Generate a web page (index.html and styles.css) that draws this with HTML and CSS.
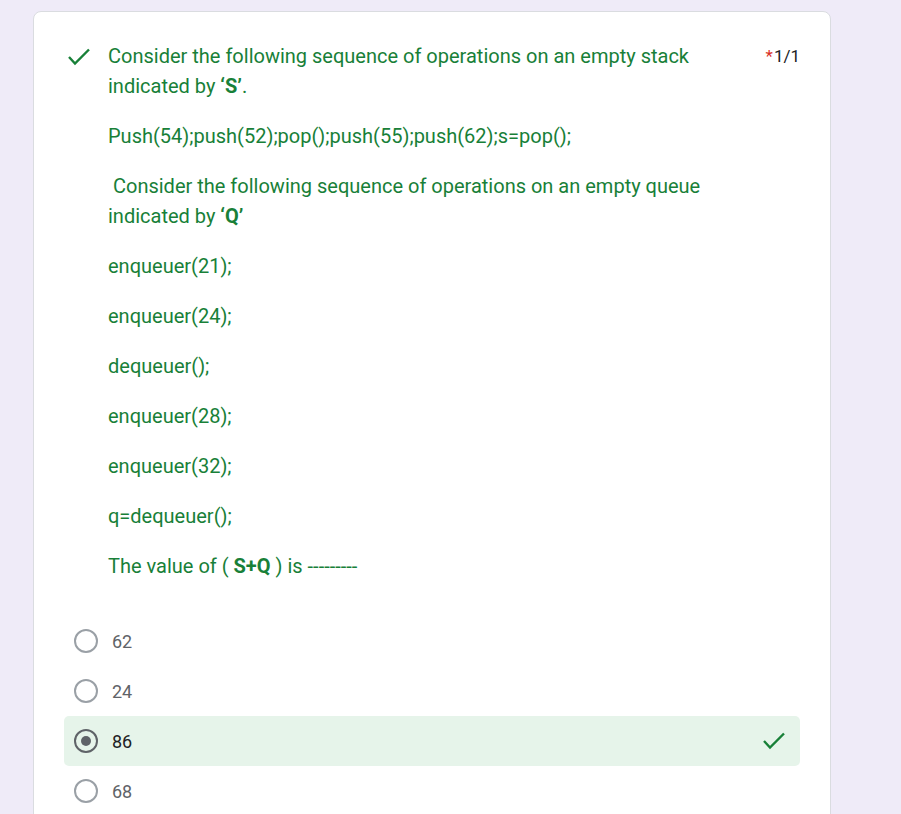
FILE: index.html
```html
<!DOCTYPE html>
<html>
<head>
<meta charset="utf-8">
<link rel="stylesheet" href="styles.css">
</head>
<body>
<div class="card">
  <div class="question">
    <div class="status-icon">
      <svg width="26" height="20" viewBox="0 0 26 20"><polyline points="2,10 8,16.5 22,2.5" fill="none" stroke="#188038" stroke-width="2.4"/></svg>
    </div>
    <div class="title">
      <p>Consider the following sequence of operations on an empty stack indicated by <b>‘S’</b>.</p>
      <p>Push(54);push(52);pop();push(55);push(62);s=pop();</p>
      <p>&nbsp;Consider the following sequence of operations on an empty queue indicated by <b>‘Q’</b></p>
      <p>enqueuer(21);</p>
      <p>enqueuer(24);</p>
      <p>dequeuer();</p>
      <p>enqueuer(28);</p>
      <p>enqueuer(32);</p>
      <p>q=dequeuer();</p>
      <p>The value of ( <b>S+Q</b> ) is ---------</p>
    </div>
    <div class="score"><span class="req">*</span>1/1</div>
  </div>
  <div class="options">
    <div class="option"><span class="radio"></span><span class="label">62</span></div>
    <div class="option"><span class="radio"></span><span class="label">24</span></div>
    <div class="option selected"><span class="radio"></span><span class="label">86</span>
      <svg class="ok" width="26" height="20" viewBox="0 0 26 20"><polyline points="2,10 8,16.5 22,2.5" fill="none" stroke="#188038" stroke-width="2.4"/></svg>
    </div>
    <div class="option"><span class="radio"></span><span class="label">68</span></div>
  </div>
</div>
</body>
</html>
```
FILE: styles.css
```css
html, body {
  margin: 0;
  padding: 0;
  background: #efebf8;
  font-family: Roboto, "Noto Sans", sans-serif;
}
body {
  padding: 11px 0 0 33px;
}
.card {
  background: #fff;
  border: 1px solid #dadce0;
  border-radius: 8px;
  padding: 29px 30px 24px 30px;
  box-sizing: border-box;
  width: 798px;
}
.question {
  display: flex;
  align-items: flex-start;
}
.status-icon {
  width: 41px;
  padding-left: 3px;
  padding-top: 6px;
  flex: none;
}
.status-icon svg { display: block; }
.title {
  width: 625px;
  flex: none;
  color: #188038;
  font-size: 20px;
  line-height: 30px;
}
.title p {
  margin: 0 0 20px 0;
}
.title p:last-child { margin-bottom: 0; }
.title b { font-weight: 700; }
.score {
  margin-left: auto;
  flex: none;
  font-size: 17px;
  line-height: 30px;
  color: #202124;
}
.req { color: #d93025; margin-right: 1px; }
.options {
  margin-top: 35px;
  display: flex;
  flex-direction: column;
}
.option {
  height: 50px;
  display: flex;
  align-items: center;
  padding-left: 10px;
  border-radius: 5px;
}
.option.selected {
  background: #e6f4ea;
}
.radio {
  width: 20px;
  height: 20px;
  border: 2px solid #9aa0a6;
  border-radius: 50%;
  box-sizing: content-box;
  flex: none;
  display: flex;
  align-items: center;
  justify-content: center;
}
.selected .radio {
  border-color: #5f6368;
}
.selected .radio::after {
  content: "";
  width: 10px;
  height: 10px;
  border-radius: 50%;
  background: #5f6368;
}
.label {
  margin-left: 14px;
  font-size: 18px;
  color: #5f6368;
  flex: 1;
}
.selected .label { color: #202124; }
.ok {
  margin-right: 12px;
}
```
